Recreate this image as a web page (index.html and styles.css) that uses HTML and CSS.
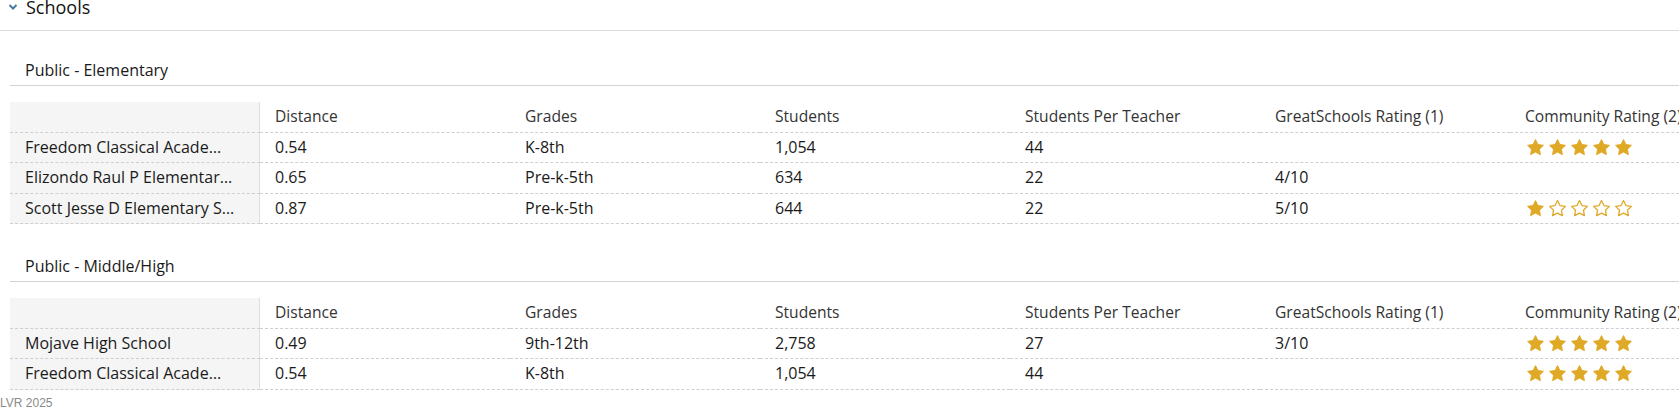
FILE: index.html
```html
<!DOCTYPE html>
<html lang="en">
<head>
<meta charset="utf-8">
<title>Schools</title>
<link rel="stylesheet" href="styles.css">
</head>
<body>
<div class="panel">
  <div class="panel-head">
    <svg class="chev" width="10" height="8" viewBox="0 0 10 8"><polyline points="1.5,2 5,5.5 8.5,2"/></svg>
    <span class="panel-title">Schools</span>
  </div>

  <section class="group">
    <h3 class="group-title">Public - Elementary</h3>
    <table class="schools">
      <colgroup><col><col><col><col><col><col><col></colgroup>
      <thead>
        <tr><th class="name"></th><th>Distance</th><th>Grades</th><th>Students</th><th>Students Per Teacher</th><th>GreatSchools Rating (1)</th><th>Community Rating (2)</th></tr>
      </thead>
      <tbody>
        <tr>
          <td class="name">Freedom Classical Acade…</td><td>0.54</td><td>K-8th</td><td>1,054</td><td>44</td><td></td>
          <td><div class="stars">
            <svg class="star on" viewBox="0 0 24 24"><polygon points="12,2 15.09,8.26 22,9.27 17,14.14 18.18,21.02 12,17.77 5.82,21.02 7,14.14 2,9.27 8.91,8.26"/></svg>
            <svg class="star on" viewBox="0 0 24 24"><polygon points="12,2 15.09,8.26 22,9.27 17,14.14 18.18,21.02 12,17.77 5.82,21.02 7,14.14 2,9.27 8.91,8.26"/></svg>
            <svg class="star on" viewBox="0 0 24 24"><polygon points="12,2 15.09,8.26 22,9.27 17,14.14 18.18,21.02 12,17.77 5.82,21.02 7,14.14 2,9.27 8.91,8.26"/></svg>
            <svg class="star on" viewBox="0 0 24 24"><polygon points="12,2 15.09,8.26 22,9.27 17,14.14 18.18,21.02 12,17.77 5.82,21.02 7,14.14 2,9.27 8.91,8.26"/></svg>
            <svg class="star on" viewBox="0 0 24 24"><polygon points="12,2 15.09,8.26 22,9.27 17,14.14 18.18,21.02 12,17.77 5.82,21.02 7,14.14 2,9.27 8.91,8.26"/></svg>
          </div></td>
        </tr>
        <tr>
          <td class="name">Elizondo Raul P Elementar…</td><td>0.65</td><td>Pre-k-5th</td><td>634</td><td>22</td><td>4/10</td><td></td>
        </tr>
        <tr>
          <td class="name">Scott Jesse D Elementary S…</td><td>0.87</td><td>Pre-k-5th</td><td>644</td><td>22</td><td>5/10</td>
          <td><div class="stars">
            <svg class="star on" viewBox="0 0 24 24"><polygon points="12,2 15.09,8.26 22,9.27 17,14.14 18.18,21.02 12,17.77 5.82,21.02 7,14.14 2,9.27 8.91,8.26"/></svg>
            <svg class="star off" viewBox="0 0 24 24"><polygon points="12,2 15.09,8.26 22,9.27 17,14.14 18.18,21.02 12,17.77 5.82,21.02 7,14.14 2,9.27 8.91,8.26"/></svg>
            <svg class="star off" viewBox="0 0 24 24"><polygon points="12,2 15.09,8.26 22,9.27 17,14.14 18.18,21.02 12,17.77 5.82,21.02 7,14.14 2,9.27 8.91,8.26"/></svg>
            <svg class="star off" viewBox="0 0 24 24"><polygon points="12,2 15.09,8.26 22,9.27 17,14.14 18.18,21.02 12,17.77 5.82,21.02 7,14.14 2,9.27 8.91,8.26"/></svg>
            <svg class="star off" viewBox="0 0 24 24"><polygon points="12,2 15.09,8.26 22,9.27 17,14.14 18.18,21.02 12,17.77 5.82,21.02 7,14.14 2,9.27 8.91,8.26"/></svg>
          </div></td>
        </tr>
      </tbody>
    </table>
  </section>

  <section class="group">
    <h3 class="group-title">Public - Middle/High</h3>
    <table class="schools">
      <colgroup><col><col><col><col><col><col><col></colgroup>
      <thead>
        <tr><th class="name"></th><th>Distance</th><th>Grades</th><th>Students</th><th>Students Per Teacher</th><th>GreatSchools Rating (1)</th><th>Community Rating (2)</th></tr>
      </thead>
      <tbody>
        <tr>
          <td class="name">Mojave High School</td><td>0.49</td><td>9th-12th</td><td>2,758</td><td>27</td><td>3/10</td>
          <td><div class="stars">
            <svg class="star on" viewBox="0 0 24 24"><polygon points="12,2 15.09,8.26 22,9.27 17,14.14 18.18,21.02 12,17.77 5.82,21.02 7,14.14 2,9.27 8.91,8.26"/></svg>
            <svg class="star on" viewBox="0 0 24 24"><polygon points="12,2 15.09,8.26 22,9.27 17,14.14 18.18,21.02 12,17.77 5.82,21.02 7,14.14 2,9.27 8.91,8.26"/></svg>
            <svg class="star on" viewBox="0 0 24 24"><polygon points="12,2 15.09,8.26 22,9.27 17,14.14 18.18,21.02 12,17.77 5.82,21.02 7,14.14 2,9.27 8.91,8.26"/></svg>
            <svg class="star on" viewBox="0 0 24 24"><polygon points="12,2 15.09,8.26 22,9.27 17,14.14 18.18,21.02 12,17.77 5.82,21.02 7,14.14 2,9.27 8.91,8.26"/></svg>
            <svg class="star on" viewBox="0 0 24 24"><polygon points="12,2 15.09,8.26 22,9.27 17,14.14 18.18,21.02 12,17.77 5.82,21.02 7,14.14 2,9.27 8.91,8.26"/></svg>
          </div></td>
        </tr>
        <tr>
          <td class="name">Freedom Classical Acade…</td><td>0.54</td><td>K-8th</td><td>1,054</td><td>44</td><td></td>
          <td><div class="stars">
            <svg class="star on" viewBox="0 0 24 24"><polygon points="12,2 15.09,8.26 22,9.27 17,14.14 18.18,21.02 12,17.77 5.82,21.02 7,14.14 2,9.27 8.91,8.26"/></svg>
            <svg class="star on" viewBox="0 0 24 24"><polygon points="12,2 15.09,8.26 22,9.27 17,14.14 18.18,21.02 12,17.77 5.82,21.02 7,14.14 2,9.27 8.91,8.26"/></svg>
            <svg class="star on" viewBox="0 0 24 24"><polygon points="12,2 15.09,8.26 22,9.27 17,14.14 18.18,21.02 12,17.77 5.82,21.02 7,14.14 2,9.27 8.91,8.26"/></svg>
            <svg class="star on" viewBox="0 0 24 24"><polygon points="12,2 15.09,8.26 22,9.27 17,14.14 18.18,21.02 12,17.77 5.82,21.02 7,14.14 2,9.27 8.91,8.26"/></svg>
            <svg class="star on" viewBox="0 0 24 24"><polygon points="12,2 15.09,8.26 22,9.27 17,14.14 18.18,21.02 12,17.77 5.82,21.02 7,14.14 2,9.27 8.91,8.26"/></svg>
          </div></td>
        </tr>
      </tbody>
    </table>
  </section>
</div>
<div class="copyright">LVR 2025</div>
</body>
</html>
```

FILE: styles.css
```css
html, body {
  margin: 0;
  padding: 0;
  overflow: hidden;
  background: #fff;
}

body {
  width: 1679px;
  height: 410px;
  font-family: "Open Sans", "Noto Sans", sans-serif;
  color: #1a1a1a;
}

.panel-head {
  height: 30px;
  display: flex;
  align-items: flex-start;
  padding-left: 8px;
  border-bottom: 1px solid #dcdcdc;
}

.chev {
  margin-top: 3px;
  margin-right: 8px;
  fill: none;
  stroke: #4a7a9a;
  stroke-width: 2;
}

.panel-title {
  font-size: 18px;
  line-height: 14px;
  color: #111;
}

.group {
  padding-top: 29px;
}

.group-title {
  margin: 0 0 0 10px;
  padding: 0 0 5px 15px;
  font-size: 16px;
  line-height: 20px;
  font-weight: 400;
  color: #1a1a1a;
  border-bottom: 1px solid #d3d3d3;
}

.schools {
  margin: 16px 0 3px 10px;
  width: 1750px;
  table-layout: fixed;
  border-collapse: separate;
  border-spacing: 0;
  font-size: 16px;
}

.schools col {
  width: 250px;
}

.schools th,
.schools td {
  padding: 0 0 0 15px;
  line-height: 29.5px;
  border-bottom: 1px dashed #cfcfcf;
  text-align: left;
  font-weight: 400;
  white-space: nowrap;
  overflow: hidden;
}

.schools th {
  font-size: 15.6px;
  color: #333;
}

.schools .name {
  background: #f5f5f5;
  border-right: 1px solid #dedede;
}

.stars {
  display: flex;
  align-items: center;
  gap: 3px;
  height: 29.5px;
  margin-left: 1px;
}

.star {
  width: 19px;
  height: 19px;
  stroke-linejoin: round;
}

.star.on {
  fill: #dfa926;
  stroke: #dfa926;
  stroke-width: 1.2;
}

.star.off {
  fill: #fff;
  stroke: #dfa926;
  stroke-width: 1.6;
}

.copyright {
  margin-top: 6.5px;
  font-family: "Liberation Sans", Arial, sans-serif;
  font-size: 12px;
  line-height: 14px;
  color: #8a8a8a;
}
```
